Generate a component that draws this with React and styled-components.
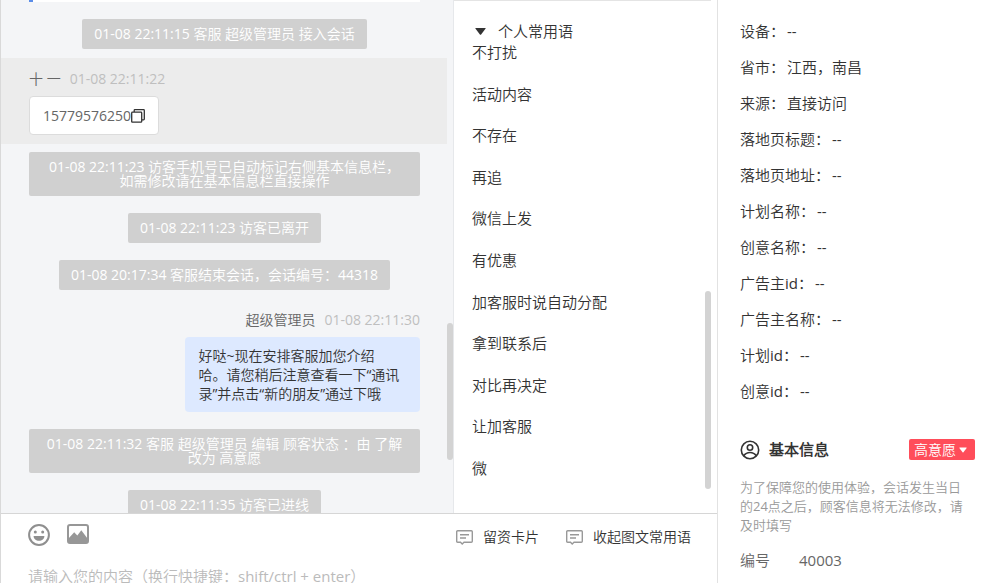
import React from 'react';

import styled, { createGlobalStyle } from 'styled-components';

const GlobalStyle = createGlobalStyle`
  * {
    box-sizing: border-box;
  }
  body {
    margin: 0;
    overflow: hidden;
    background: #fff;
    color: #333;
    font-family: 'Open Sans', 'Noto Sans CJK SC DemiLight', 'Noto Sans CJK SC', sans-serif;
    font-size: 15px;
  }
  button,
  textarea {
    margin: 0;
    padding: 0;
    border: 0;
    background: none;
    color: inherit;
    font: inherit;
  }
  button {
    cursor: pointer;
  }
  svg {
    display: block;
    flex: none;
  }
`;

const Page = styled.div`
  display: grid;
  grid-template-columns: minmax(0, 1fr) 268px;
  height: 100vh;
`;

const Main = styled.main`
  display: flex;
  flex-direction: column;
  min-width: 0;
  min-height: 0;
  border-left: 1px solid #d9d9d9;
`;

const Workspace = styled.div`
  display: flex;
  flex: 1;
  min-height: 0;
`;

const Chat = styled.section`
  display: flex;
  flex: 1;
  min-width: 0;
  overflow: hidden;
  background: #f4f5f7;
`;

const MessageList = styled.div`
  flex: 1;
  min-width: 0;
  font-size: 14px;
`;

const ScrollTrack = styled.div`
  display: grid;
  grid-template-rows: ${(props) => props.$rows};
  flex: 0 0 6px;
`;

const ScrollThumb = styled.div`
  grid-row: 2;
  border-radius: 3px;
  background: #d3d3d3;
`;

const CardTail = styled.div`
  height: 2px;
  margin: 0 27px 9px 28px;
  border-left: 4px solid #5b8de8;
  background: #fff;
`;

const Item = styled.div`
  display: flex;
  flex-direction: column;
  align-items: ${(props) => props.$align || 'center'};
  padding: 8px 27px 9px 28px;
  background: ${(props) => (props.$active ? '#ececec' : 'transparent')};
`;

const Notice = styled.p`
  width: ${(props) => (props.$wide ? '100%' : 'auto')};
  margin: 0;
  padding: 8px 12px;
  border-radius: 2px;
  background: #d0d0d0;
  color: #fff;
  line-height: 14px;
  text-align: center;
  white-space: pre-line;
`;

const Meta = styled.div`
  display: flex;
  gap: 9px;
  margin-bottom: 4px;
  color: #666;
  line-height: 26px;
`;

const Time = styled.time`
  color: #bfbfbf;
`;

const VisitorBubble = styled.div`
  display: flex;
  align-items: center;
  padding: 9px 13px;
  border: 1px solid #dcdcdc;
  border-radius: 4px;
  background: #fff;
  color: #666;
  line-height: 19px;
`;

const AgentBubble = styled.div`
  width: 60%;
  padding: 9px 13px;
  border-radius: 4px;
  background: #dde9ff;
  line-height: 19px;
  white-space: pre-line;
`;

const Phrases = styled.aside`
  display: flex;
  flex: 0 0 264px;
  padding-right: 6px;
  border-left: 1px solid #e6e8eb;
`;

const PhraseFrame = styled.div`
  display: flex;
  flex: 1;
  border-top: 1px solid #e4e4e4;
`;

const PhraseBody = styled.div`
  display: flex;
  flex: 1;
  flex-direction: column;
  padding: 20px 18px 34px;
`;

const PhraseTitle = styled.button`
  display: flex;
  align-items: center;
  gap: 12px;
  padding-left: 3px;
  line-height: 21px;
`;

const PhraseList = styled.ul`
  display: flex;
  flex: 1;
  flex-direction: column;
  justify-content: space-between;
  margin: 0;
  padding: 0;
  list-style: none;
  line-height: 21px;
`;

const PhraseButton = styled.button`
  display: block;
  line-height: 21px;
`;

const Composer = styled.section`
  display: flex;
  flex: 0 0 70px;
  flex-direction: column;
  overflow: hidden;
  padding: 0 26px 0 27px;
  border-top: 1px solid #d6d6d6;
`;

const Toolbar = styled.div`
  display: flex;
  flex: none;
  align-items: center;
  justify-content: space-between;
  height: 46px;
  margin-bottom: 6px;
`;

const ToolGroup = styled.div`
  display: flex;
  align-items: center;
  gap: ${(props) => props.$gap};
`;

const IconButton = styled.button`
  padding-bottom: 4px;
`;

const TextTool = styled.button`
  display: flex;
  align-items: center;
  gap: 10px;
  font-size: 14px;
  line-height: 20px;
`;

const MessageInput = styled.textarea`
  flex: none;
  width: 100%;
  height: 60px;
  outline: 0;
  resize: none;
  line-height: 20px;
  &::placeholder {
    color: #bbb;
    opacity: 1;
  }
`;

const Details = styled.aside`
  overflow: hidden;
  padding: 13px 10px 0 22px;
  border-left: 1px solid #e2e2e2;
`;

const Field = styled.p`
  display: flex;
  gap: 2px;
  margin: 0;
  line-height: 36px;
`;

const SectionHead = styled.div`
  display: flex;
  align-items: center;
  justify-content: space-between;
  height: 21px;
  margin-top: 30px;
`;

const SectionTitle = styled.h2`
  display: flex;
  align-items: center;
  gap: 9px;
  margin: 0;
  font-size: 15px;
  line-height: 21px;
`;

const LevelTag = styled.button`
  display: flex;
  align-items: center;
  gap: 3px;
  height: 21px;
  padding: 0 8px 0 5px;
  border-radius: 2px;
  background: #ff4d5a;
  color: #fff;
  font-size: 14px;
  line-height: 21px;
`;

const Hint = styled.p`
  margin: 18px 0 15px;
  padding-right: 5px;
  color: #999;
  font-size: 13px;
  line-height: 19px;
`;

const InfoList = styled.dl`
  display: grid;
  grid-template-columns: 59px 1fr;
  margin: 0;
  color: #666;
  line-height: 21px;
  dd {
    margin: 0;
  }
`;

const phrases = [
  '不打扰',
  '活动内容',
  '不存在',
  '再追',
  '微信上发',
  '有优惠',
  '加客服时说自动分配',
  '拿到联系后',
  '对比再决定',
  '让加客服',
  '微'
];

const fields = [
  ['设备', '--'],
  ['省市', '江西，南昌'],
  ['来源', '直接访问'],
  ['落地页标题', '--'],
  ['落地页地址', '--'],
  ['计划名称', '--'],
  ['创意名称', '--'],
  ['广告主id', '--'],
  ['广告主名称', '--'],
  ['计划id', '--'],
  ['创意id', '--']
];

const CopyIcon = () => (
  <svg width='14' height='14' viewBox='0 0 14 14' fill='none' stroke='#333' strokeWidth='1.3'>
    <rect x='0.7' y='3.2' width='10' height='10' rx='0.8' />
    <path d='M3.2 3V1.4q0-.7.7-.7h8.7q.7 0 .7.7v8.7q0 .7-.7.7H11' />
  </svg>
);

const SmileIcon = () => (
  <svg width='22' height='22' viewBox='0 0 22 22' fill='#8f8f8f'>
    <circle cx='11' cy='11' r='9.9' fill='none' stroke='#8f8f8f' strokeWidth='2' />
    <circle cx='7.3' cy='8' r='1.5' />
    <circle cx='14.7' cy='8' r='1.5' />
    <path d='M5.6 12h10.8c0 2.7-2.4 4.8-5.4 4.8S5.6 14.7 5.6 12z' />
  </svg>
);

const PictureIcon = () => (
  <svg width='22' height='22' viewBox='0 0 22 22'>
    <rect x='1' y='1' width='20' height='18' rx='2' fill='none' stroke='#979797' strokeWidth='2' />
    <path d='M1.5 14.5l5.7-6.300 3.100 3.200 4-5.200 6.200 8.300V19H1.500z' fill='#979797' />
  </svg>
);

const CardIcon = () => (
  <svg width='17' height='15' viewBox='0 0 17 15' fill='none' stroke='#999' strokeWidth='1.4'>
    <path d='M1.7.7h13.6q1 0 1 1v9.6q0 1-1 1H8l-1.8 1.700-1.700-1.700H1.700q-1 0-1-1V1.700q0-1 1-1z' />
    <path d='M4 4.800h9M4 8h6' />
  </svg>
);

const UserIcon = () => (
  <svg width='20' height='20' viewBox='0 0 20 20' fill='none' stroke='#333' strokeWidth='1.6'>
    <circle cx='10' cy='10' r='8.7' />
    <circle cx='10' cy='7.5' r='2.7' />
    <path d='M3.7 15.800c1.500-2.200 3.700-3.300 6.300-3.300s4.800 1.100 6.300 3.300' />
  </svg>
);

const Caret = ({ width, height }) => (
  <svg width={width} height={height} viewBox='0 0 11 7' fill='currentColor'>
    <path d='M.8 0h9.400q.8 0 .4.6L6.100 6.500q-.6.6-1.200 0L.4.6Q0 0 .8 0z' />
  </svg>
);

const ChatPanel = () => (
  <Chat>
    <MessageList>
      <CardTail />
      <Item>
        <Notice>01-08 22:11:15 客服 超级管理员 接入会话</Notice>
      </Item>
      <Item $align='flex-start' $active>
        <Meta>
          <span>十 一</span>
          <Time>01-08 22:11:22</Time>
        </Meta>
        <VisitorBubble>
          15779576250
          <button type='button' aria-label='复制'>
            <CopyIcon />
          </button>
        </VisitorBubble>
      </Item>
      <Item>
        <Notice $wide>
          {'01-08 22:11:23 访客手机号已自动标记右侧基本信息栏，\n如需修改请在基本信息栏直接操作'}
        </Notice>
      </Item>
      <Item>
        <Notice>01-08 22:11:23 访客已离开</Notice>
      </Item>
      <Item>
        <Notice>01-08 20:17:34 客服结束会话，会话编号：44318</Notice>
      </Item>
      <Item $align='flex-end'>
        <Meta>
          <span>超级管理员</span>
          <Time>01-08 22:11:30</Time>
        </Meta>
        <AgentBubble>
          {'好哒~现在安排客服加您介绍\n哈。请您稍后注意查看一下“通讯\n录”并点击“新的朋友”通过下哦'}
        </AgentBubble>
      </Item>
      <Item>
        <Notice $wide>
          {'01-08 22:11:32 客服 超级管理员 编辑 顾客状态 ：由 了解\n改为 高意愿'}
        </Notice>
      </Item>
      <Item>
        <Notice>01-08 22:11:35 访客已进线</Notice>
      </Item>
    </MessageList>
    <ScrollTrack $rows='323fr 137fr 53fr'>
      <ScrollThumb />
    </ScrollTrack>
  </Chat>
);

const PhrasePanel = () => (
  <Phrases>
    <PhraseFrame>
      <PhraseBody>
        <PhraseTitle type='button'>
          <Caret width='11' height='7' />
          个人常用语
        </PhraseTitle>
        <PhraseList>
          {phrases.map((phrase) => (
            <li key={phrase}>
              <PhraseButton type='button'>{phrase}</PhraseButton>
            </li>
          ))}
        </PhraseList>
      </PhraseBody>
      <ScrollTrack $rows='290fr 198fr 24fr'>
        <ScrollThumb />
      </ScrollTrack>
    </PhraseFrame>
  </Phrases>
);

const ComposerPanel = () => (
  <Composer>
    <Toolbar>
      <ToolGroup $gap='17px'>
        <IconButton type='button' aria-label='表情'>
          <SmileIcon />
        </IconButton>
        <IconButton type='button' aria-label='图片'>
          <PictureIcon />
        </IconButton>
      </ToolGroup>
      <ToolGroup $gap='27px'>
        <TextTool type='button'>
          <CardIcon />
          留资卡片
        </TextTool>
        <TextTool type='button'>
          <CardIcon />
          收起图文常用语
        </TextTool>
      </ToolGroup>
    </Toolbar>
    <MessageInput
      aria-label='消息内容'
      placeholder='请输入您的内容（换行快捷键：shift/ctrl + enter）'
    />
  </Composer>
);

const DetailPanel = () => (
  <Details>
    {fields.map(([label, value]) => (
      <Field key={label}>
        <span>{label}：</span>
        <span>{value}</span>
      </Field>
    ))}
    <SectionHead>
      <SectionTitle>
        <UserIcon />
        基本信息
      </SectionTitle>
      <LevelTag type='button'>
        高意愿
        <Caret width='8' height='6' />
      </LevelTag>
    </SectionHead>
    <Hint>为了保障您的使用体验，会话发生当日的24点之后，顾客信息将无法修改，请及时填写</Hint>
    <InfoList>
      <dt>编号</dt>
      <dd>40003</dd>
    </InfoList>
  </Details>
);

const App = () => (
  <>
    <GlobalStyle />
    <Page>
      <Main>
        <Workspace>
          <ChatPanel />
          <PhrasePanel />
        </Workspace>
        <ComposerPanel />
      </Main>
      <DetailPanel />
    </Page>
  </>
);

export default App;
